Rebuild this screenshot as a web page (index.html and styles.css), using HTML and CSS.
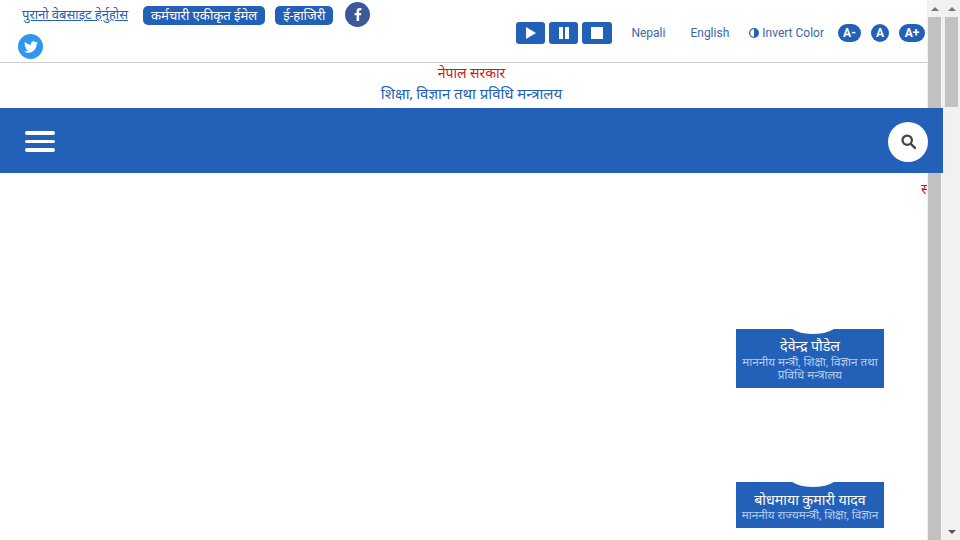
FILE: index.html
```html
<!DOCTYPE html>
<html>
<head>
    <title>शिक्षा, विज्ञान तथा प्रविधि मन्त्रालय</title>
    <link rel="stylesheet" href="styles.css">
</head>
<body>
    <div class="window">
        <div class="page">
            <!-- top bar -->
            <div class="top-bar">
                <div class="top-links">
                    <a class="old-site" href="#">पुरानो वेबसाइट हेर्नुहोस</a>
                    <a class="pill-link" href="#">कर्मचारी एकीकृत ईमेल</a>
                    <a class="pill-link" href="#">ई-हाजिरी</a>
                    <a class="social facebook" href="#">
                        <svg viewBox="0 0 320 512"><path d="M279.14 288l14.22-92.66h-88.91v-60.13c0-25.35 12.42-50.06 52.24-50.06h40.42V6.26S260.43 0 225.36 0c-73.22 0-121.08 44.38-121.08 124.72v70.62H22.89V288h81.39v224h100.17V288z"/></svg>
                    </a>
                    <a class="social twitter" href="#">
                        <svg viewBox="0 0 512 512"><path d="M459.37 151.716c.325 4.548.325 9.097.325 13.645 0 138.72-105.583 298.558-298.558 298.558-59.452 0-114.68-17.219-161.137-47.106 8.447.974 16.568 1.299 25.34 1.299 49.055 0 94.213-16.568 130.274-44.832-46.132-.975-84.792-31.188-98.112-72.772 6.498.974 12.995 1.624 19.818 1.624 9.421 0 18.843-1.3 27.614-3.573-48.081-9.747-84.143-51.98-84.143-102.985v-1.299c13.969 7.797 30.214 12.67 47.431 13.319-28.264-18.843-46.781-51.005-46.781-87.391 0-19.492 5.197-37.36 14.294-52.954 51.655 63.675 129.3 105.258 216.365 109.807-1.624-7.797-2.599-15.918-2.599-24.04 0-57.828 46.782-104.934 104.934-104.934 30.213 0 57.502 12.67 76.67 33.137 23.715-4.548 46.456-13.32 66.599-25.34-7.798 24.366-24.366 44.833-46.132 57.827 21.117-2.273 41.584-8.122 60.426-16.243-14.292 20.791-32.161 39.308-52.628 54.253z"/></svg>
                    </a>
                </div>
                <div class="top-tools">
                    <div class="player">
                        <button class="player-btn"><svg viewBox="0 0 12 12"><path d="M1 0l10 6-10 6z"/></svg></button>
                        <button class="player-btn"><svg viewBox="0 0 12 12"><path d="M1 0h4v12H1zM7 0h4v12H7z"/></svg></button>
                        <button class="player-btn"><svg viewBox="0 0 12 12"><path d="M0 0h12v12H0z"/></svg></button>
                    </div>
                    <a class="tool-link lang-nepali" href="#">Nepali</a>
                    <a class="tool-link lang-english" href="#">English</a>
                    <a class="tool-link invert" href="#">
                        <svg class="invert-icon" viewBox="0 0 12 12"><path d="M6 0a6 6 0 1 0 0 12A6 6 0 0 0 6 0zm0 1.5v9a4.5 4.5 0 0 1 0-9z" fill-rule="evenodd"/></svg>
                        Invert Color
                    </a>
                    <div class="font-sizes">
                        <button class="font-btn font-small">A-</button>
                        <button class="font-btn font-normal">A</button>
                        <button class="font-btn font-large">A+</button>
                    </div>
                </div>
            </div>

            <!-- site title -->
            <div class="site-title">
                <div class="gov-name">नेपाल सरकार</div>
                <div class="ministry-name">शिक्षा, विज्ञान तथा प्रविधि मन्त्रालय</div>
            </div>

            <!-- nav -->
            <div class="nav-bar">
                <button class="menu-btn"><span></span><span></span><span></span></button>
                <button class="search-btn">
                    <svg viewBox="0 0 16 16"><circle cx="6.6" cy="6.6" r="5" fill="none" stroke-width="2.4"/><path d="M10.4 10.4l4.4 4.4" fill="none" stroke-width="2.6" stroke-linecap="round"/></svg>
                </button>
            </div>

            <div class="ticker">सम्पर्क</div>

            <!-- officials -->
            <div class="officials">
                <div class="official-card first-card">
                    <div class="official-name">देवेन्द्र पौडेल</div>
                    <div class="official-role">माननीय मन्त्री, शिक्षा, विज्ञान तथा प्रविधि मन्त्रालय</div>
                </div>
                <div class="official-card second-card">
                    <div class="official-name">बोधमाया कुमारी यादव</div>
                    <div class="official-role">माननीय राज्यमन्त्री, शिक्षा, विज्ञान</div>
                </div>
            </div>

            <div class="scrollbar inner-scrollbar">
                <span class="arrow-up"></span>
                <span class="thumb"></span>
            </div>
        </div>

        <div class="scrollbar outer-scrollbar">
            <span class="arrow-up"></span>
            <span class="thumb"></span>
            <span class="arrow-down"></span>
        </div>
    </div>
</body>
</html>
```

FILE: styles.css
```css
html, body { margin: 0; padding: 0; }

body {
    font-family: Roboto, "Noto Sans", sans-serif;
    background: #fff;
    overflow: hidden;
}

a { text-decoration: none; }
button { border: none; padding: 0; font-family: inherit; cursor: pointer; }

.window {
    display: flex;
    width: 960px;
    height: 540px;
    overflow: hidden;
}

.page {
    position: relative;
    flex: 0 0 943px;
    height: 540px;
    overflow: hidden;
}

/* top bar */
.top-bar {
    display: flex;
    justify-content: space-between;
    height: 62px;
    border-bottom: 1px solid #ccc;
}

.top-links {
    display: flex;
    flex-wrap: wrap;
    align-items: flex-start;
    align-content: flex-start;
    width: 376px;
    padding: 2px 0 0 18px;
    box-sizing: border-box;
}

.old-site {
    margin: 4px 15px 0 4px;
    color: #2360b8;
    font-size: 13px;
    line-height: 18px;
    text-decoration: underline;
}

.pill-link {
    margin: 4px 10px 0 0;
    padding: 0 8px;
    height: 19px;
    line-height: 19px;
    background: #2360b8;
    color: #fff;
    font-size: 13.1px;
    border-radius: 5px;
}

.social {
    display: flex;
    align-items: center;
    justify-content: center;
    width: 25px;
    height: 25px;
    border-radius: 50%;
    fill: #fff;
}

.facebook { background: #3b5998; margin-left: 2px; }
.facebook svg { width: 8px; height: 13px; }
.twitter { background: #2f98ee; margin-top: 7px; }
.twitter svg { width: 14px; height: 14px; }

.top-tools {
    display: flex;
    align-items: center;
    height: 22px;
    margin-top: 22px;
    padding-right: 18px;
}

.player { display: flex; gap: 4px; }

.player-btn {
    display: flex;
    align-items: center;
    justify-content: center;
    width: 29px;
    height: 22px;
    background: #2360b8;
    border-radius: 3px;
    fill: #fff;
}

.player-btn:last-child { width: 30px; }
.player-btn svg { width: 12px; height: 12px; }

.tool-link {
    color: #3c66a8;
    font-size: 12px;
    line-height: 22px;
}

.lang-nepali { margin-left: 19px; }
.lang-english { margin-left: 25px; }
.invert { display: flex; align-items: center; gap: 3px; margin-left: 20px; }
.invert-icon { width: 10px; height: 10px; fill: #2360b8; }

.font-sizes { display: flex; gap: 10px; margin-left: 14px; }

.font-btn {
    height: 18px;
    background: #2360b8;
    color: #fff;
    font-size: 12px;
    font-weight: 700;
    border-radius: 9px;
}

.font-small { width: 23px; }
.font-normal { width: 18px; }
.font-large { width: 26px; }

/* site title */
.site-title {
    height: 45px;
    text-align: center;
}

.gov-name {
    color: #d0141c;
    font-size: 14px;
    line-height: 21px;
}

.ministry-name {
    color: #2360b8;
    font-size: 15px;
    line-height: 20px;
}

/* nav */
.nav-bar {
    position: relative;
    z-index: 2;
    display: flex;
    align-items: center;
    justify-content: space-between;
    height: 65px;
    padding: 0 15px 0 25px;
    background: #2360b8;
}

.menu-btn {
    display: flex;
    flex-direction: column;
    gap: 5px;
    width: 30px;
    margin-top: 2px;
    background: none;
}

.menu-btn span {
    height: 3.5px;
    background: #fff;
    border-radius: 2px;
}

.search-btn {
    display: flex;
    align-items: center;
    justify-content: center;
    width: 40px;
    height: 40px;
    margin-top: 2px;
    background: #fff;
    border-radius: 50%;
}

.search-btn svg { width: 15px; height: 15px; stroke: #444; }

.ticker {
    height: 30px;
    padding-left: 921px;
    color: #d0141c;
    font-size: 14px;
    line-height: 32px;
    white-space: nowrap;
}

/* officials */
.officials {
    display: flex;
    flex-direction: column;
    width: 148px;
    margin-left: 736px;
    padding-top: 126px;
}

.official-card {
    position: relative;
    overflow: hidden;
    background: #2360b8;
    text-align: center;
    box-sizing: border-box;
}

.official-card::before {
    content: "";
    position: absolute;
    top: -15px;
    left: 53px;
    width: 48px;
    height: 20px;
    background: #fff;
    border-radius: 50%;
}

.first-card { height: 59px; padding-top: 9px; }
.second-card { height: 46px; padding-top: 10px; margin-top: 94px; }

.official-name {
    color: #fff;
    font-size: 14.2px;
    line-height: 16px;
}

.official-role {
    margin-top: 2px;
    color: #b5cdf0;
    font-size: 11.7px;
    line-height: 13px;
}

.second-card .official-role { margin-top: 1px; white-space: nowrap; }

/* scrollbars are drawn, the page itself doesn't scroll */
.scrollbar {
    display: flex;
    flex-direction: column;
    box-sizing: border-box;
    background: #f1f1f1;
}

.inner-scrollbar {
    position: absolute;
    top: 0;
    right: 0;
    width: 16px;
    height: 540px;
    padding-left: 1px;
}

.outer-scrollbar {
    flex: 0 0 17px;
    height: 540px;
    padding-left: 2px;
}

.scrollbar .thumb {
    display: block;
    width: 13px;
    margin-top: 6px;
    background: #c1c1c1;
}

.inner-scrollbar .thumb { height: 523px; }
.outer-scrollbar .thumb { height: 90px; }

.arrow-up, .arrow-down {
    display: block;
    width: 0;
    height: 0;
    margin-left: 3px;
    border-left: 4px solid transparent;
    border-right: 4px solid transparent;
}

.arrow-up { margin-top: 7px; border-bottom: 4px solid #777; }

.arrow-down {
    margin-top: auto;
    margin-bottom: 6px;
    border-top: 4px solid #555;
}
```
